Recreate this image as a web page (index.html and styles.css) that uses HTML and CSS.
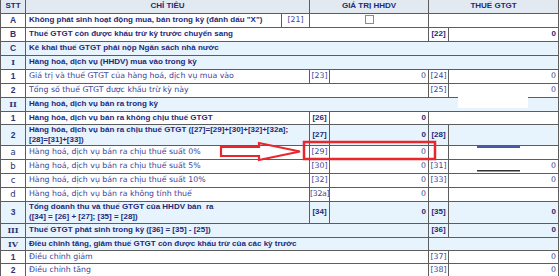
FILE: index.html
```html
<!DOCTYPE html>
<html lang="vi">
<head>
<meta charset="utf-8">
<title>Tờ khai thuế GTGT</title>
<link rel="stylesheet" href="styles.css">
</head>
<body>
<div class="wrap">
<table class="grid">
  <colgroup>
    <col class="c-stt"><col class="c-text"><col class="c-code"><col class="c-code2"><col class="c-val"><col class="c-code2"><col class="c-val2">
  </colgroup>
  <tr class="head h13">
    <th>STT</th><th colspan="2">CHỈ TIÊU</th><th colspan="2">GIÁ TRỊ HHDV</th><th colspan="2">THUẾ GTGT</th>
  </tr>
  <tr class="h14">
    <td class="stt b">A</td><td class="b">Không phát sinh hoạt động mua, bán trong kỳ (đánh dấu "X")</td><td class="code">[21]</td><td colspan="2" class="center"><span class="chk"></span></td><td colspan="2"></td>
  </tr>
  <tr class="h14">
    <td class="stt b">B</td><td colspan="4" class="b">Thuế GTGT còn được khấu trừ kỳ trước chuyển sang</td><td class="code b">[22]</td><td class="val b">0</td>
  </tr>
  <tr class="h14 blue">
    <td class="stt b">C</td><td colspan="6" class="b">Kê khai thuế GTGT phải nộp Ngân sách nhà nước</td>
  </tr>
  <tr class="h14 blue">
    <td class="stt b roman">I</td><td colspan="6" class="b">Hàng hoá, dịch vụ (HHDV) mua vào trong kỳ</td>
  </tr>
  <tr class="h14">
    <td class="stt b">1</td><td colspan="2">Giá trị và thuế GTGT của hàng hoá, dịch vụ mua vào</td><td class="code">[23]</td><td class="val">0</td><td class="code">[24]</td><td class="val">0</td>
  </tr>
  <tr class="h14">
    <td class="stt b">2</td><td colspan="4">Tổng số thuế GTGT được khấu trừ kỳ này</td><td class="code">[25]</td><td class="val">0</td>
  </tr>
  <tr class="h14 blue">
    <td class="stt b roman">II</td><td colspan="6" class="b">Hàng hoá, dịch vụ bán ra trong kỳ</td>
  </tr>
  <tr class="h13">
    <td class="stt b">1</td><td colspan="2" class="b">Hàng hóa, dịch vụ bán ra không chịu thuế GTGT</td><td class="code b">[26]</td><td class="val b">0</td><td colspan="2"></td>
  </tr>
  <tr class="h21 blue">
    <td class="stt b">2</td><td colspan="2" class="b">Hàng hóa, dịch vụ bán ra chịu thuế GTGT ([27]=[29]+[30]+[32]+[32a];<br>[28]=[31]+[33])</td><td class="code b">[27]</td><td class="val b">0</td><td class="code b">[28]</td><td></td>
  </tr>
  <tr class="h14">
    <td class="stt">a</td><td colspan="2">Hàng hoá, dịch vụ bán ra chịu thuế suất 0%</td><td class="code">[29]</td><td class="val">0</td><td></td><td></td>
  </tr>
  <tr class="h14">
    <td class="stt">b</td><td colspan="2">Hàng hoá, dịch vụ bán ra chịu thuế suất 5%</td><td class="code">[30]</td><td class="val">0</td><td class="code">[31]</td><td class="val">0</td>
  </tr>
  <tr class="h14">
    <td class="stt">c</td><td colspan="2">Hàng hoá, dịch vụ bán ra chịu thuế suất 10%</td><td class="code">[32]</td><td class="val">0</td><td class="code">[33]</td><td class="val">0</td>
  </tr>
  <tr class="h14">
    <td class="stt">d</td><td colspan="2">Hàng hoá, dịch vụ bán ra không tính thuế</td><td class="code tight">[32a]</td><td class="val">0</td><td></td><td></td>
  </tr>
  <tr class="h22 blue">
    <td class="stt b">3</td><td colspan="2" class="b">Tổng doanh thu và thuế GTGT của HHDV bán&nbsp; ra<br>([34] = [26] + [27]; [35] = [28])</td><td class="code b">[34]</td><td class="val b">0</td><td class="code b">[35]</td><td class="val b">0</td>
  </tr>
  <tr class="h14 blue">
    <td class="stt b roman">III</td><td colspan="4" class="b">Thuế GTGT phát sinh trong kỳ ([36] = [35] - [25])</td><td class="code b">[36]</td><td class="val b">0</td>
  </tr>
  <tr class="h13 blue">
    <td class="stt b roman">IV</td><td colspan="4" class="b">Điều chỉnh tăng, giảm thuế GTGT còn được khấu trừ của các kỳ trước</td><td colspan="2"></td>
  </tr>
  <tr class="h13">
    <td class="stt b">1</td><td colspan="4">Điều chỉnh giảm</td><td class="code">[37]</td><td class="val">0</td>
  </tr>
  <tr class="h13">
    <td class="stt b">2</td><td colspan="4">Điều chỉnh tăng</td><td class="code">[38]</td><td class="val">0</td>
  </tr>
</table>
<svg class="mark" width="560" height="276" viewBox="0 0 560 276" aria-hidden="true">
  <rect x="458" y="96" width="70" height="12" fill="#ffffff"/>
  <rect x="477" y="146" width="43" height="2" fill="#4a58a8"/>
  <rect x="477" y="170" width="43" height="1.5" fill="#333333"/>
  <rect x="304" y="142" width="131" height="17" fill="none" stroke="#e8262b" stroke-width="2.5"/>
  <path d="M221 147 L259 147 L259 143 L300 151.5 L259 160 L259 156 L221 156 Z" fill="none" stroke="#e8262b" stroke-width="2.2" stroke-linejoin="miter"/>
</svg>
</div>
</body>
</html>
```
FILE: styles.css
```css
html, body {
  margin: 0;
  padding: 0;
  background: #ffffff;
}
.wrap {
  position: relative;
  width: 560px;
  height: 276px;
  overflow: hidden;
}
.grid {
  border-collapse: collapse;
  table-layout: fixed;
  width: 558px;
  font-family: "DejaVu Sans", sans-serif;
  font-size: 7.8px;
  color: #3b449a;
}
.c-stt { width: 25px; }
.c-text { width: 256px; }
.c-code { width: 28px; }
.c-code2 { width: 20px; }
.c-val { width: 99px; }
.c-val2 { width: 110px; }
.grid th, .grid td {
  border: 1px solid #5d5d5d;
  padding: 0 3px;
  line-height: 10px;
  white-space: nowrap;
  overflow: hidden;
  vertical-align: middle;
  text-align: left;
}
.head th {
  border-top: none;
  background: #e2e9f1;
  color: #1d2a78;
  font-family: "Liberation Sans", Arial, sans-serif;
  font-size: 8px;
  font-weight: bold;
  text-align: center;
}
.blue td { background: #e7f3fd; }
.b {
  font-family: "Liberation Sans", Arial, sans-serif;
  font-size: 8px;
  font-weight: bold;
  color: #1d2a78;
}
.stt { text-align: center !important; padding: 0 !important; color: #2e3370; font-size: 8.5px; }
.roman { font-family: "DejaVu Serif", "Liberation Serif", serif; font-size: 8px; }
.code { text-align: center !important; padding: 0 !important; }
.tight { letter-spacing: -0.3px; }
.val { text-align: right !important; padding-right: 2px !important; }
.center { text-align: center !important; }
.chk {
  display: inline-block;
  width: 7px;
  height: 7px;
  border: 1px solid #8a8a8a;
  background: #ffffff;
  vertical-align: middle;
}
.h13 { height: 13px; }
.h14 { height: 14px; }
.h21 { height: 21px; }
.h22 { height: 22px; }
.mark {
  position: absolute;
  left: 0;
  top: 0;
  pointer-events: none;
}
```
